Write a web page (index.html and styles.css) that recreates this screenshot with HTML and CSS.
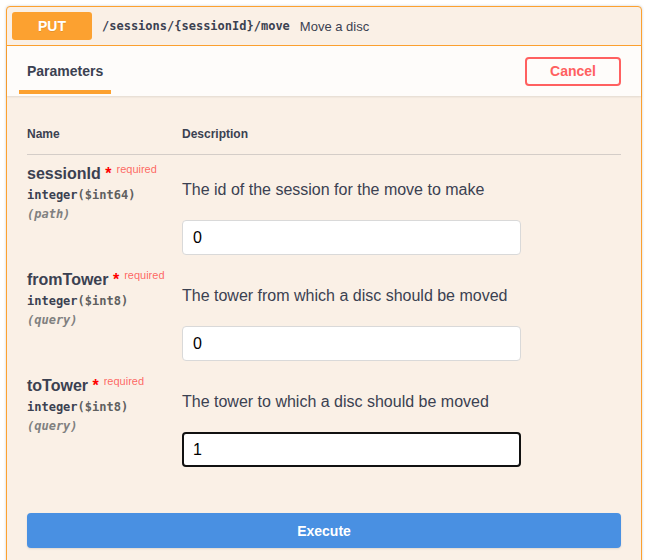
FILE: index.html
```html
<!DOCTYPE html>
<html>
<head>
<meta charset="utf-8">
<link rel="stylesheet" href="styles.css">
</head>
<body>
<div class="opblock">
  <div class="summary">
    <span class="method">PUT</span>
    <span class="path">/sessions/{sessionId}/move</span>
    <span class="summary-desc">Move a disc</span>
  </div>
  <div class="section-header">
    <div class="tab"><span>Parameters</span></div>
    <button class="cancel">Cancel</button>
  </div>
  <div class="table-container">
    <div class="thead">
      <div class="th">Name</div>
      <div class="th">Description</div>
    </div>
    <div class="row">
      <div class="name-col">
        <div class="pname">sessionId<span class="star">&nbsp;*</span><sup class="req">required</sup></div>
        <div class="ptype">integer<span class="fmt">($int64)</span></div>
        <div class="pin">(path)</div>
      </div>
      <div class="desc-col">
        <p class="pdesc">The id of the session for the move to make</p>
        <div class="input">0</div>
      </div>
    </div>
    <div class="row">
      <div class="name-col">
        <div class="pname">fromTower<span class="star">&nbsp;*</span><sup class="req">required</sup></div>
        <div class="ptype">integer<span class="fmt">($int8)</span></div>
        <div class="pin">(query)</div>
      </div>
      <div class="desc-col">
        <p class="pdesc">The tower from which a disc should be moved</p>
        <div class="input">0</div>
      </div>
    </div>
    <div class="row">
      <div class="name-col">
        <div class="pname">toTower<span class="star">&nbsp;*</span><sup class="req">required</sup></div>
        <div class="ptype">integer<span class="fmt">($int8)</span></div>
        <div class="pin">(query)</div>
      </div>
      <div class="desc-col">
        <p class="pdesc">The tower to which a disc should be moved</p>
        <div class="input focused">1</div>
      </div>
    </div>
  </div>
  <div class="execute-wrapper">
    <button class="execute">Execute</button>
  </div>
</div>
</body>
</html>
```
FILE: styles.css
```css
html, body {
  margin: 0;
  padding: 0;
  background: #ffffff;
}
body {
  padding: 6px 7px 0 6px;
  font-family: "Liberation Sans", Arial, sans-serif;
  color: #3b4151;
}
.opblock {
  border: 1px solid #fca130;
  border-radius: 4px;
  background: #faf0e6;
  box-shadow: 0 0 3px rgba(0,0,0,.19);
}
.summary {
  display: flex;
  align-items: center;
  padding: 5px;
  border-bottom: 1px solid #fca130;
}
.method {
  width: 80px;
  height: 28px;
  line-height: 28px;
  text-align: center;
  background: #fca130;
  color: #fff;
  border-radius: 3px;
  font-size: 14px;
  font-weight: 700;
  text-shadow: 0 1px 0 rgba(0,0,0,.1);
}
.path {
  font-family: "DejaVu Sans Mono", monospace;
  font-size: 12px;
  font-weight: 700;
  padding: 0 10px;
  color: #3b4151;
}
.summary-desc {
  font-size: 13px;
  color: #3b4151;
}
.section-header {
  display: flex;
  align-items: center;
  justify-content: space-between;
  height: 50px;
  box-sizing: border-box;
  padding: 0 20px 0 12px;
  background: rgba(255,255,255,.8);
  box-shadow: 0 1px 2px rgba(0,0,0,.1);
}
.tab {
  align-self: flex-start;
  padding: 17px 8px 10px;
  border-bottom: 4px solid #fca130;
  font-size: 14px;
  line-height: 17px;
  font-weight: 700;
  color: #3b4151;
}
.cancel {
  font-family: "Liberation Sans", Arial, sans-serif;
  font-size: 14px;
  font-weight: 700;
  line-height: 17px;
  color: #ff6060;
  background: transparent;
  border: 2px solid #ff6060;
  border-radius: 4px;
  padding: 4px 23px;
  margin: 0;
}
.table-container {
  padding: 19px 20px 20px;
}
.thead {
  display: grid;
  grid-template-columns: 155px 1fr;
  border-bottom: 1px solid rgba(59,65,81,.2);
}
.th {
  padding: 12px 0;
  font-size: 12px;
  line-height: 15px;
  font-weight: 700;
  color: #3b4151;
}
.row {
  display: grid;
  grid-template-columns: 155px 1fr;
  padding: 10px 0 6px;
}
.pname {
  font-size: 16px;
  line-height: 18px;
  font-weight: 700;
  color: #3b4151;
  white-space: nowrap;
}
.star {
  color: #ff0000;
}
.req {
  font-size: 11px;
  font-weight: 400;
  color: rgba(255,0,0,.6);
  padding-left: 5px;
  vertical-align: 6px;
  line-height: 0;
}
.ptype {
  font-family: "DejaVu Sans Mono", monospace;
  font-size: 12px;
  line-height: 14px;
  font-weight: 700;
  padding: 5px 0;
  color: #3b4151;
}
.fmt {
  color: #606060;
}
.pin {
  font-family: "DejaVu Sans Mono", monospace;
  font-size: 12px;
  line-height: 14px;
  font-weight: 700;
  font-style: italic;
  color: #808080;
}
.desc-col {
  padding-top: 15px;
}
.pdesc {
  margin: 0 0 21px;
  font-size: 16px;
  line-height: 19px;
  color: #3b4151;
}
.input {
  width: 339px;
  height: 35px;
  box-sizing: border-box;
  padding: 8px 10px;
  background: #fff;
  border: 1px solid #d9d9d9;
  border-radius: 4px;
  font-size: 16px;
  line-height: 17px;
  color: #000;
}
.input.focused {
  border: 2px solid #111;
  padding: 7px 9px;
}
.execute-wrapper {
  padding: 20px 20px 20px;
}
.execute {
  display: block;
  width: 100%;
  height: 35px;
  margin: 0;
  background: #4990e2;
  border: 2px solid #4990e2;
  border-radius: 4px;
  color: #fff;
  font-family: "Liberation Sans", Arial, sans-serif;
  font-size: 14px;
  font-weight: 700;
  box-shadow: 0 1px 2px rgba(0,0,0,.1);
}
```
